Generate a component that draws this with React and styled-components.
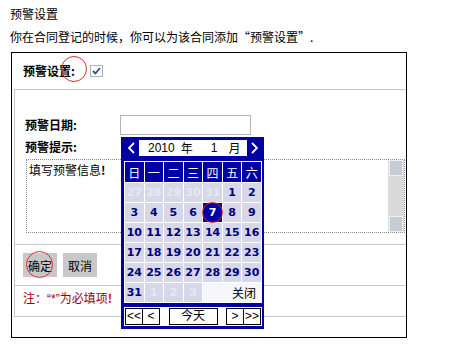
import React from 'react';
import styled, { createGlobalStyle } from 'styled-components';

const GlobalStyle = createGlobalStyle`
  body {
    margin: 0;
    background: #fff;
    color: #000;
    font-family: "Noto Sans CJK SC", "Liberation Sans", sans-serif;
    font-size: 12px;
  }
`;

const NAVY = '#0000a5';

const Page = styled.div`
  width: 466px;
  box-sizing: border-box;
  padding: 6px 10px 0 10px;
`;
const Title = styled.div`
  line-height: 16px;
`;
const Intro = styled.div`
  margin-top: 7px;
  line-height: 16px;
`;

const Box = styled.div`
  margin-top: 7px;
  margin-left: 1px;
  width: 396px;
  height: 286px;
  box-sizing: border-box;
  border: 1px solid #000;
  padding-left: 2px;
`;
const HeadRow = styled.div`
  height: 36px;
  display: flex;
  align-items: center;
  padding-left: 9px;
`;
const Label = styled.span`
  position: relative;
  font-weight: bold;
  line-height: 16px;
`;
const Circle = styled.span`
  position: absolute;
  left: ${p => p.$left}px;
  top: ${p => p.$top}px;
  width: ${p => p.$size}px;
  height: ${p => p.$size}px;
  border: 1.5px solid #e02a2a;
  border-radius: 50%;
  box-sizing: border-box;
  pointer-events: none;
`;
const Check = styled.svg`
  margin-left: 15px;
  display: block;
`;

const Table = styled.div`
  border-top: 1px solid #c8c8c8;
  border-left: 1px solid #c8c8c8;
  border-bottom: 1px solid #c8c8c8;
`;
const Fields = styled.div`
  height: 155px;
  box-sizing: border-box;
  padding: 25px 1px 0 10px;
  border-bottom: 1px solid #c8c8c8;
`;
const DateRow = styled.div`
  display: flex;
  align-items: center;
  height: 20px;
`;
const FieldLabel = styled(Label)`
  width: 95px;
  margin-top: ${p => p.$mt || 0}px;
  display: block;
`;
const DateWrap = styled.div`
  position: relative;
`;
const DateInput = styled.input`
  display: block;
  width: 131px;
  height: 20px;
  box-sizing: border-box;
  border: 1px solid #b4b4b4;
  margin: 0;
  padding: 0;
`;
const TextBox = styled.div`
  margin: 4px 0 0 1px;
  height: 74px;
  box-sizing: border-box;
  border: 1px dotted #8c8c8c;
  display: flex;
`;
const TextContent = styled.div`
  flex: 1;
  padding: 2px 2px;
  line-height: 15px;
`;
const Bang = styled.b`
  color: ${p => p.$color || 'inherit'};
`;
const Latin = styled.span`
  font-family: "Liberation Sans", sans-serif;
`;
const ScrollBar = styled.div`
  width: 16px;
  background: #dadada;
  display: flex;
  flex-direction: column;
  justify-content: space-between;
`;
const ScrollArrow = styled.div`
  height: 14px;
  margin: 0 1px;
  background: #c6ccd4;
  border: 1px solid #eef0f2;
`;

const ButtonRow = styled.div`
  height: 40px;
  display: flex;
  align-items: center;
  gap: 6px;
  padding-left: 8px;
  border-bottom: 1px solid #c8c8c8;
`;
const FormButton = styled.button`
  position: relative;
  width: 34px;
  height: 24px;
  padding: 0;
  border: none;
  background: #c8c8c8;
  color: #000;
  font-family: inherit;
  font-size: 12px;
`;
const Note = styled.div`
  height: 30px;
  box-sizing: border-box;
  padding: 4px 0 0 8px;
  line-height: 16px;
  color: #990000;
`;

const Calendar = styled.div`
  position: absolute;
  left: 1px;
  top: 22px;
  width: 143px;
  box-sizing: border-box;
  background: ${NAVY};
  padding: 3px 2px 3px 3px;
  z-index: 5;
`;
const CalHead = styled.div`
  height: 16px;
  display: flex;
  align-items: center;
  background: #fff;
  font-size: 12px;
  line-height: 16px;
`;
const NavBtn = styled.div`
  width: 15px;
  height: 16px;
  background: ${NAVY};
  display: flex;
  align-items: center;
  justify-content: center;
  margin-left: ${p => (p.$right ? 'auto' : '0')};
`;
const HeadText = styled.span`
  margin-left: ${p => p.$ml}px;
  font-family: ${p => (p.$num ? '"Liberation Sans", sans-serif' : 'inherit')};
`;
const Grid = styled.div`
  margin-top: 5px;
  display: grid;
  grid-template-columns: repeat(7, 1fr);
  grid-template-rows: 20px repeat(6, 19px);
  gap: 1px;
  padding: 1px;
  background: #fff;
`;
const WeekCell = styled.div`
  background: ${NAVY};
  color: #fff;
  display: flex;
  align-items: center;
  justify-content: center;
  font-size: 12px;
`;
const DayCell = styled.div`
  position: relative;
  background: ${p => (p.$today ? NAVY : '#d6d8ea')};
  color: ${p => (p.$today ? '#fff' : p.$faint ? '#e6e8f2' : '#00007a')};
  display: flex;
  align-items: center;
  justify-content: center;
  font-family: "DejaVu Sans", sans-serif;
  font-weight: bold;
  font-size: 11px;
`;
const CloseCell = styled.div`
  grid-column: span 3;
  background: #f6f6fa;
  display: flex;
  align-items: center;
  justify-content: flex-end;
  padding-right: 5px;
  font-size: 12px;
`;
const CalFoot = styled.div`
  margin-top: 4px;
  height: 19px;
  background: #fff;
  display: flex;
  align-items: center;
  justify-content: space-between;
  padding: 0 1px;
`;
const FootGroup = styled.div`
  display: flex;
`;
const FootBtn = styled.div`
  width: ${p => p.$w}px;
  height: 17px;
  box-sizing: border-box;
  border: 1px solid #000;
  border-left-color: ${p => p.$joinColor || '#000'};
  margin-left: ${p => (p.$join ? '-1px' : '0')};
  background: #fff;
  display: flex;
  align-items: center;
  justify-content: center;
  font-family: "Liberation Sans", "Noto Sans CJK SC", sans-serif;
  font-size: 12px;
  line-height: 15px;
`;

const Chevron = ({ right }) => (
  <svg width="9" height="12" viewBox="0 0 9 12">
    <polyline
      points={right ? '2,1 7,6 2,11' : '7,1 2,6 7,11'}
      fill="none"
      stroke="#fff"
      strokeWidth="1.8"
    />
  </svg>
);

const weekDays = ['日', '一', '二', '三', '四', '五', '六'];
const rows = [
  [[27, 1], [28, 1], [29, 1], [30, 1], [31, 1], [1], [2]],
  [[3], [4], [5], [6], [7, 0, 1], [8], [9]],
  [[10], [11], [12], [13], [14], [15], [16]],
  [[17], [18], [19], [20], [21], [22], [23]],
  [[24], [25], [26], [27], [28], [29], [30]],
  [[31], [1, 1], [2, 1], [3, 1]],
];

const App = () => {
  return (
    <Page>
      <GlobalStyle />
      <Title>预警设置</Title>
      <Intro>你在合同登记的时候，你可以为该合同添加“预警设置”.</Intro>
      <Box>
        <HeadRow>
          <Label>
            预警设置:
            <Circle $left={38} $top={-7} $size={26} />
          </Label>
          <Check width="13" height="12" viewBox="0 0 13 12">
            <rect x="0.5" y="0.5" width="12" height="11" fill="#fff" stroke="#a8b0c8" />
            <polyline points="3,6 5.5,8.5 10,3" fill="none" stroke="#2e4f86" strokeWidth="1.8" />
          </Check>
        </HeadRow>
        <Table>
          <Fields>
            <DateRow>
              <FieldLabel>预警日期:</FieldLabel>
              <DateWrap>
                <DateInput type="text" readOnly />
                <Calendar>
                  <CalHead>
                    <NavBtn><Chevron /></NavBtn>
                    <HeadText $ml={9} $num>2010</HeadText>
                    <HeadText $ml={6}>年</HeadText>
                    <HeadText $ml={18} $num>1</HeadText>
                    <HeadText $ml={11}>月</HeadText>
                    <NavBtn $right><Chevron right /></NavBtn>
                  </CalHead>
                  <Grid>
                    {weekDays.map(d => <WeekCell key={d}>{d}</WeekCell>)}
                    {rows.map((row, i) => (
                      <React.Fragment key={i}>
                        {row.map(([n, faint, today], j) => (
                          <DayCell key={j} $faint={faint} $today={today}>
                            {n}
                            {today && <Circle $left={-1} $top={-1} $size={21} />}
                          </DayCell>
                        ))}
                        {i === 5 && <CloseCell>关闭</CloseCell>}
                      </React.Fragment>
                    ))}
                  </Grid>
                  <CalFoot>
                    <FootGroup>
                      <FootBtn $w={18}>&lt;&lt;</FootBtn>
                      <FootBtn $w={18} $join>&lt;</FootBtn>
                    </FootGroup>
                    <FootBtn $w={49}>今天</FootBtn>
                    <FootGroup>
                      <FootBtn $w={18}>&gt;</FootBtn>
                      <FootBtn $w={18} $join $joinColor={NAVY}>&gt;&gt;</FootBtn>
                    </FootGroup>
                  </CalFoot>
                </Calendar>
              </DateWrap>
            </DateRow>
            <FieldLabel $mt={4}>预警提示:</FieldLabel>
            <TextBox>
              <TextContent>填写预警信息<Bang>!</Bang></TextContent>
              <ScrollBar>
                <ScrollArrow />
                <ScrollArrow />
              </ScrollBar>
            </TextBox>
          </Fields>
          <ButtonRow>
            <FormButton>
              确定
              <Circle $left={3} $top={-2} $size={27} />
            </FormButton>
            <FormButton>取消</FormButton>
          </ButtonRow>
          <Note>
            注：<Latin>“*”</Latin>为必填项<Bang $color="#e00000">!</Bang>
          </Note>
        </Table>
      </Box>
    </Page>
  );
};

export default App;
